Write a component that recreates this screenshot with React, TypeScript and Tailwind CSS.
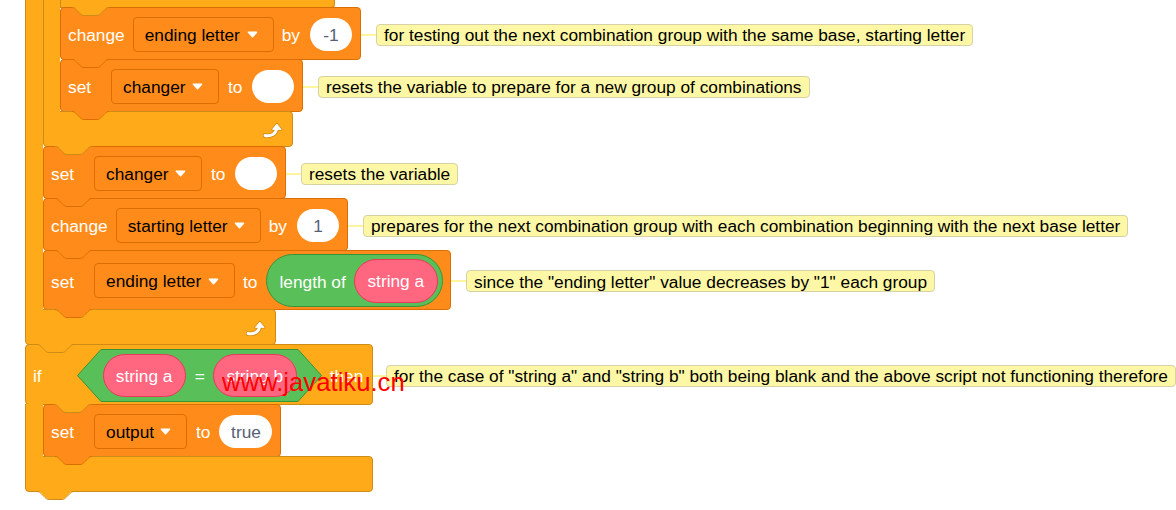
import React from "react";

const VAR = "bg-[#FF8C1A] border-[#DB6E00]";
const CTRL = "bg-[#FFAB19] border-[#CF8B17]";

function Tab({ fill, stroke, pos = "left-[11px]" }: { fill: string; stroke: string; pos?: string }) {
  return (
    <svg className={`absolute z-10 top-[calc(100%-1px)] ${pos}`} width="37" height="10" viewBox="0 0 37 10">
      <path d="M0,0 L0,1 c2,0 3,1 4,2 l4,4 c1,1 2,2 4,2 h13 c2,0 3,-1 4,-2 l4,-4 c1,-1 2,-2 4,-2 L37,0 Z" fill={fill} />
      <path d="M0,1.5 c2,0 3,1 4,2 l4,4 c1,1 2,2 4,2 h13 c2,0 3,-1 4,-2 l4,-4 c1,-1 2,-2 4,-2" fill="none" stroke={stroke} strokeWidth="1" />
    </svg>
  );
}

function Comment({ text, gap = "w-[15px]" }: { text: string; gap?: string }) {
  return (
    <div className="absolute left-full ml-px top-[calc(50%+1px)] -translate-y-1/2 flex items-center">
      <div className={`${gap} h-[2px] bg-[#FFF59D]`} />
      <div className="h-[22px] flex items-center whitespace-nowrap rounded-[4px] border border-[#D6D2A6] bg-[#FEF8A6] px-[7px] pt-px text-black">
        {text}
      </div>
    </div>
  );
}

function Dropdown({ text, cls }: { text: string; cls: string }) {
  return (
    <div className={`${cls} h-[35px] shrink-0 flex items-center justify-between pl-[11px] pr-[15px] pt-px rounded-[4px] border ${VAR}`}>
      <span className="whitespace-nowrap">{text}</span>
      <svg width="11" height="7" viewBox="0 0 11 7">
        <path d="M1.5 1.2 L9.5 1.2 L5.5 5.6 Z" fill="white" stroke="white" strokeWidth="1.6" strokeLinejoin="round" />
      </svg>
    </div>
  );
}

function Pill({ text, cls }: { text?: string; cls: string }) {
  return (
    <div className={`${cls} h-[33px] shrink-0 rounded-full bg-white flex items-center justify-center pt-px text-[#575E75]`}>
      {text}
    </div>
  );
}

function PinkReporter({ text, cls }: { text: string; cls: string }) {
  return (
    <div className={`${cls} relative shrink-0 rounded-full bg-[#FF6680] border border-[#E8395A] flex items-center justify-center pt-px text-white whitespace-nowrap`}>
      {text}
    </div>
  );
}

function Label({ text, cls = "" }: { text: string; cls?: string }) {
  return <span className={`${cls} relative top-px shrink-0 whitespace-nowrap text-white`}>{text}</span>;
}

function RepeatIcon() {
  return (
    <svg width="21" height="16" viewBox="0 0 21 16">
      <path d="M2 13.5 C8 14.5 13 12 13.6 6.5" fill="none" stroke="#CF8B17" strokeWidth="4.6" strokeLinecap="round" />
      <path d="M9.2 7.6 L13.8 1.8 L18.4 7.6 Z" fill="#CF8B17" stroke="#CF8B17" strokeWidth="2" strokeLinejoin="round" />
      <path d="M2 13.5 C8 14.5 13 12 13.6 6.5" fill="none" stroke="white" strokeWidth="2.8" strokeLinecap="round" />
      <path d="M9.4 7.4 L13.8 2 L18.2 7.4 Z" fill="white" stroke="white" strokeWidth="0.8" strokeLinejoin="round" />
    </svg>
  );
}

function CBottom({ cls, icon }: { cls: string; icon?: boolean }) {
  return (
    <div className={`relative -mt-px ${cls} h-[36px] border ${CTRL} rounded-b-[4px] rounded-tr-[4px] flex justify-end items-start pt-[10px] pr-[8px]`}>
      {icon && <RepeatIcon />}
      <Tab fill="#FFAB19" stroke="#CF8B17" />
    </div>
  );
}

function VarBlock({
  cls,
  first,
  children,
  comment,
}: {
  cls: string;
  first?: boolean;
  children: React.ReactNode;
  comment?: string;
}) {
  return (
    <div className={`relative ${first ? "" : "-mt-px"} ${cls} flex items-center shrink-0 border ${VAR} rounded-[4px] pl-[7px] pt-px`}>
      {children}
      <Tab fill="#FF8C1A" stroke="#DB6E00" />
      {comment && <Comment text={comment} />}
    </div>
  );
}

export default function App() {
  return (
    <div className="relative w-[1176px] h-[510px] overflow-hidden bg-white font-['Liberation_Sans',Arial,sans-serif] text-[17.3px] leading-[20px]">
      <div className="flex flex-col items-start pl-[25px]">
        {/* outer repeat */}
        <div className="flex flex-col items-start">
          <div className="flex items-stretch">
            <div className={`relative z-[1] w-[18px] shrink-0 border-l ${CTRL}`} />
            <div className="flex flex-col items-start">
              {/* inner repeat */}
              <div className="flex flex-col items-start">
                <div className="flex items-stretch">
                  <div className={`relative z-[1] w-[17px] shrink-0 border-l ${CTRL}`} />
                  <div className="flex flex-col items-start">
                    <div className={`relative w-[275px] h-[8px] border-x border-b ${CTRL} rounded-br-[4px]`}>
                      <Tab fill="#FFAB19" stroke="#CF8B17" />
                    </div>
                    <VarBlock cls="w-[301px] h-[53px]" comment="for testing out the next combination group with the same base, starting letter">
                      <Label text="change" />
                      <Dropdown text="ending letter" cls="ml-[8px] w-[141px]" />
                      <Label text="by" cls="ml-[8px]" />
                      <Pill text="-1" cls="ml-[10px] w-[42px]" />
                    </VarBlock>
                    <VarBlock cls="w-[243px] h-[53px]" comment="resets the variable to prepare for a new group of combinations">
                      <Label text="set" />
                      <Dropdown text="changer" cls="ml-[20px] w-[108px]" />
                      <Label text="to" cls="ml-[9px]" />
                      <Pill cls="ml-[10px] w-[42px]" />
                    </VarBlock>
                  </div>
                </div>
                <CBottom cls="w-[250px]" icon />
              </div>
              <VarBlock cls="w-[243px] h-[53px]" comment="resets the variable">
                <Label text="set" />
                <Dropdown text="changer" cls="ml-[20px] w-[108px]" />
                <Label text="to" cls="ml-[9px]" />
                <Pill cls="ml-[10px] w-[42px]" />
              </VarBlock>
              <VarBlock cls="w-[305px] h-[53px]" comment="prepares for the next combination group with each combination beginning with the next base letter">
                <Label text="change" />
                <Dropdown text="starting letter" cls="ml-[8px] w-[145px]" />
                <Label text="by" cls="ml-[8px]" />
                <Pill text="1" cls="ml-[10px] w-[42px]" />
              </VarBlock>
              <VarBlock cls="w-[408px] h-[60px]" comment={'since the "ending letter" value decreases by "1" each group'}>
                <Label text="set" />
                <Dropdown text="ending letter" cls="ml-[20px] w-[141px]" />
                <Label text="to" cls="ml-[8px]" />
                <div className="ml-[9px] w-[177px] h-[53px] shrink-0 rounded-full bg-[#59C059] border border-[#389438] flex items-center pl-[12px]">
                  <Label text="length of" />
                  <PinkReporter text="string a" cls="ml-[8px] w-[84px] h-[44px]" />
                </div>
              </VarBlock>
            </div>
          </div>
          <CBottom cls="w-[251px]" icon />
        </div>

        {/* if block */}
        <div className="relative -mt-px flex flex-col items-start">
          <div className={`relative w-[348px] h-[61px] border ${CTRL} rounded-[4px] flex items-center pl-[7px] pt-px`}>
            <Label text="if" />
            <div className="relative ml-[35px] w-[245px] h-[53px] shrink-0 flex items-center">
              <svg className="absolute inset-0" width="245" height="53" viewBox="0 0 245 53">
                <polygon points="0.5,26.5 24,0.5 221,0.5 244.5,26.5 221,52.5 24,52.5" fill="#59C059" stroke="#389438" strokeLinejoin="round" />
              </svg>
              <PinkReporter text="string a" cls="ml-[26px] w-[83px] h-[43px]" />
              <span className="relative top-px ml-[9px] text-white">=</span>
              <PinkReporter text="string b" cls="ml-[8px] w-[84px] h-[43px]" />
            </div>
            <Label text="then" cls="ml-[8px]" />
            <Tab fill="#FFAB19" stroke="#CF8B17" pos="left-[28px]" />
            <Comment text={'for the case of "string a" and "string b" both being blank and the above script not functioning therefore'} gap="w-[13px]" />
          </div>
          <div className="-mt-px flex items-stretch">
            <div className={`relative z-[1] w-[18px] shrink-0 border-l ${CTRL}`} />
            <div className="flex flex-col items-start">
              <VarBlock cls="w-[238px] h-[53px]" first>
                <Label text="set" />
                <Dropdown text="output" cls="ml-[20px] w-[93px]" />
                <Label text="to" cls="ml-[9px]" />
                <Pill text="true" cls="ml-[9px] w-[53px]" />
              </VarBlock>
            </div>
          </div>
          <CBottom cls="w-[348px]" />
        </div>
      </div>

      <div className="absolute left-[222px] top-[370px] z-20 whitespace-nowrap text-[25.7px] leading-none text-[#FF0000]">
        www.javatiku.cn
      </div>
    </div>
  );
}
